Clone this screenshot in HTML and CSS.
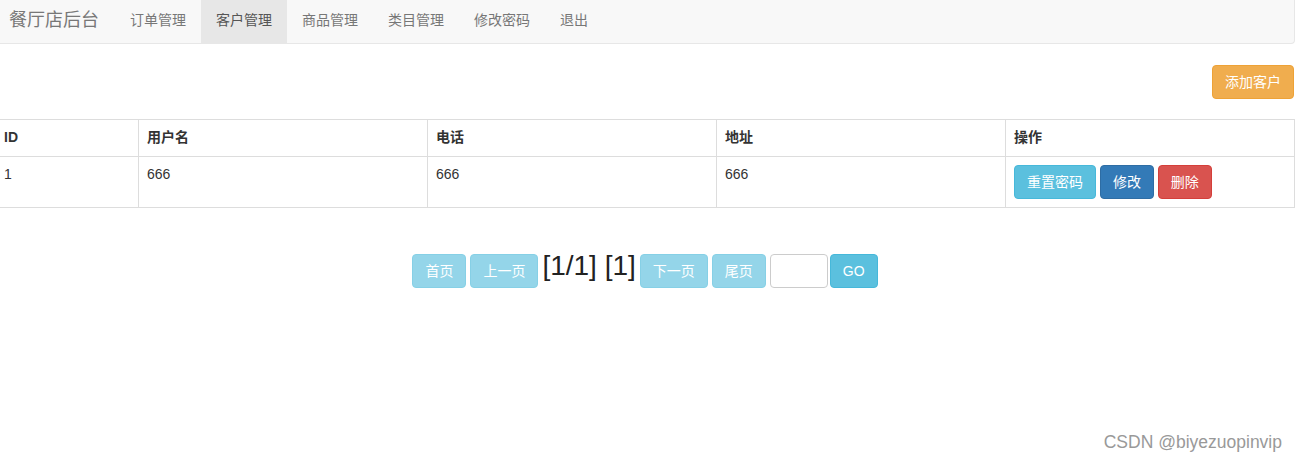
FILE: index.html
```html
<!DOCTYPE html>
<html lang="zh-CN">
<head>
  <meta charset="UTF-8">
  <title>客户管理</title>
  <link rel="stylesheet" href="styles.css">
</head>
<body>
  <div class="page">
    <nav class="navbar">
      <a class="brand" href="#">餐厅店后台</a>
      <ul class="nav">
        <li><a href="#">订单管理</a></li>
        <li class="active"><a href="#">客户管理</a></li>
        <li><a href="#">商品管理</a></li>
        <li><a href="#">类目管理</a></li>
        <li><a href="#">修改密码</a></li>
        <li><a href="#">退出</a></li>
      </ul>
    </nav>

    <div class="toolbar">
      <button class="btn btn-warning">添加客户</button>
    </div>

    <table class="table">
      <thead>
        <tr>
          <th class="col-id">ID</th>
          <th>用户名</th>
          <th>电话</th>
          <th>地址</th>
          <th>操作</th>
        </tr>
      </thead>
      <tbody>
        <tr>
          <td>1</td>
          <td>666</td>
          <td>666</td>
          <td>666</td>
          <td>
            <button class="btn btn-info">重置密码</button>
            <button class="btn btn-primary">修改</button>
            <button class="btn btn-danger">删除</button>
          </td>
        </tr>
      </tbody>
    </table>

    <div class="pager">
      <button class="btn btn-info" disabled>首页</button>
      <button class="btn btn-info" disabled>上一页</button>
      <span class="page-info">[1/1] [1]</span>
      <button class="btn btn-info" disabled>下一页</button>
      <button class="btn btn-info" disabled>尾页</button>
      <input class="page-input" type="text">
      <button class="btn btn-info go">GO</button>
    </div>
  </div>

  <div class="watermark">CSDN @biyezuopinvip</div>
</body>
</html>
```

FILE: styles.css
```css
body {
  margin: 0;
  font-family: "Liberation Sans", "Noto Sans CJK SC", sans-serif;
  font-size: 14px;
  line-height: 1.42857;
  color: #333;
  background-color: #fff;
  overflow: hidden;
}

.page {
  width: 1300px;
  margin-left: -5px;
}

.navbar {
  display: flex;
  height: 44px;
  background-color: #f8f8f8;
  border: 1px solid #e7e7e7;
  border-top: none;
  border-radius: 0 0 4px 0;
  box-sizing: border-box;
}

.brand {
  padding: 0 16px 0 13px;
  font-size: 18px;
  line-height: 40px;
  color: #777;
  text-decoration: none;
}

.nav {
  display: flex;
  margin: 0;
  padding: 0;
  list-style: none;
}

.nav li a {
  display: block;
  padding: 0 15px;
  line-height: 40px;
  height: 43px;
  color: #777;
  text-decoration: none;
}

.nav li.active a {
  background-color: #e7e7e7;
  color: #555;
}

.toolbar {
  display: flex;
  justify-content: flex-end;
  padding: 21px 1px 20px 0;
}

.btn {
  display: inline-block;
  padding: 6px 12px;
  font-family: inherit;
  font-size: 14px;
  line-height: 20px;
  border: 1px solid transparent;
  border-radius: 4px;
  color: #fff;
  cursor: pointer;
}

.btn-warning {
  background-color: #f0ad4e;
  border-color: #eea236;
}

.btn-info {
  background-color: #5bc0de;
  border-color: #46b8da;
}

.btn-primary {
  background-color: #337ab7;
  border-color: #2e6da4;
}

.btn-danger {
  background-color: #d9534f;
  border-color: #d43f3a;
}

.btn[disabled] {
  opacity: 0.65;
  cursor: not-allowed;
}

.table {
  width: 1300px;
  border-collapse: collapse;
  table-layout: fixed;
}

.table th,
.table td {
  padding: 8px;
  border: 1px solid #ddd;
  text-align: left;
  vertical-align: top;
}

.table th {
  font-weight: bold;
}

.table th.col-id {
  width: 126px;
}

.pager {
  display: flex;
  justify-content: center;
  align-items: flex-start;
  gap: 4px;
  margin-top: 46px;
}

.page-info {
  font-size: 28px;
  line-height: 30px;
  margin-top: -3px;
  color: #222;
}

.page-input {
  width: 58px;
  height: 34px;
  box-sizing: border-box;
  border: 1px solid #ccc;
  border-radius: 4px;
  margin-right: -2px;
}

.watermark {
  position: absolute;
  right: 15px;
  top: 430px;
  font-size: 17.5px;
  color: #999;
}
```
